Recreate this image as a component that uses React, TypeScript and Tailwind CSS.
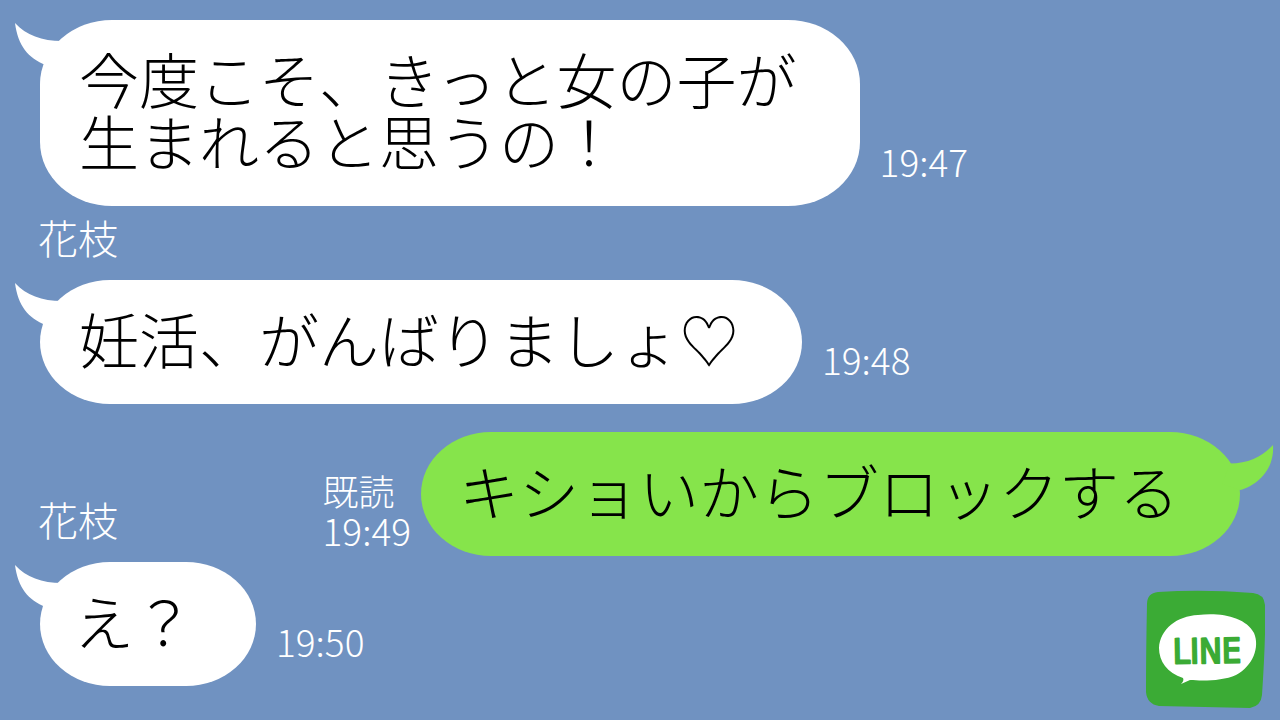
import type { ReactNode } from "react";

function LeftTail() {
  return (
    <svg aria-hidden="true" viewBox="0 0 60 56" className="absolute -left-[26px] top-0 h-14 w-[60px] fill-white">
      <path d="M1 3C12 15 28 21 48 21L58 40L32 45C14 38 4 26 1 3Z" />
    </svg>
  );
}

function RightTail() {
  return (
    <svg aria-hidden="true" viewBox="0 0 60 56" className="absolute -right-[34px] top-2 h-14 w-[60px] fill-[#86e44b]">
      <path d="M59 5C48 17 34 23.500 16 23.500L8 44L26 50C42 46 61 30 59 5Z" />
    </svg>
  );
}

function Incoming({ time, short = false, children }: { time: string; short?: boolean; children: ReactNode }) {
  return (
    <div className="flex items-end gap-5">
      <div
        className={`relative rounded-[72px/64px] bg-white pb-[35px] pt-[27px] text-[60px] leading-[62px] text-black ${
          short ? "pl-[34px] pr-[62px]" : "pl-[39px] pr-[63px]"
        }`}
      >
        <LeftTail />
        <p>{children}</p>
      </div>
      <time className="mb-[23px] text-[37px] leading-[44px]">{time}</time>
    </div>
  );
}

function Sender() {
  return <p className="-ml-[2px] text-[40px] leading-[54px]">花枝</p>;
}

function LineLogo() {
  return (
    <svg role="img" aria-label="LINE" viewBox="0 0 120 120" className="h-[120px] w-[120px] shrink-0">
      <path
        fill="#3bab35"
        d="M13 2Q58-1 108 3Q119 4 120 15Q121 45 117 105Q116 116 105 118Q60 117 14 116Q2 114 1 102Q1 60 2 14Q2 3 13 2Z"
      />
      <path
        fill="#fff"
        d="M53 25C75 22 101 27 109 43C115 57 108 76 91 85C78 91 58 91 45 90L36 94C38 92 39 90 38 88C22 83 14 71 14 58C15 39 32 26 53 25Z"
      />
      <text
        x="62"
        y="73"
        textAnchor="middle"
        transform="rotate(-1 62 60)"
        className="fill-[#3bab35] stroke-[#3bab35] font-['DejaVu_Sans_Condensed','DejaVu_Sans',sans-serif] text-[34px] font-normal"
        strokeWidth="2"
        strokeLinejoin="round"
      >
        LINE
      </text>
    </svg>
  );
}

export default function App() {
  return (
    <main
      lang="ja"
      className="min-h-screen bg-[#7092c1] pl-10 pt-5 font-['Noto_Sans_CJK_JP',sans-serif] font-light text-white"
    >
      <Incoming time="19:47">
        今度こそ、きっと女の子が
        <br />
        生まれると思うの！
      </Incoming>
      <div className="pb-4 pt-1">
        <Sender />
      </div>
      <Incoming time="19:48">妊活、がんばりましょ♡</Incoming>
      <div className="mt-7 flex items-end justify-between pr-10">
        <div className="pb-[10px]">
          <Sender />
        </div>
        <div className="flex items-end gap-[10px]">
          <div className="pb-[6px] text-[36px] leading-10">
            <p>既読</p>
            <time className="text-[37px]">19:49</time>
          </div>
          <div className="relative rounded-[72px/64px] bg-[#86e44b] pb-[35px] pl-[38px] pr-[61px] pt-[27px] text-[60px] leading-[62px] text-black">
            <RightTail />
            <p>キショいからブロックする</p>
          </div>
        </div>
      </div>
      <div className="mt-[6px] flex items-start justify-between pr-[15px]">
        <Incoming time="19:50" short>え？</Incoming>
        <div className="mt-7">
          <LineLogo />
        </div>
      </div>
    </main>
  );
}
